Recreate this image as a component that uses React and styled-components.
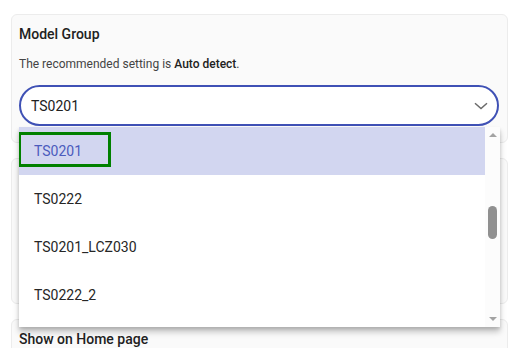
import React from "react";
import styled, { createGlobalStyle } from "styled-components";

const Global = createGlobalStyle`
  html, body { margin: 0; padding: 0; background: #ffffff; overflow: hidden; }
  body { font-family: Roboto, "Noto Sans", Arial, sans-serif; color: #212121; }
  * { box-sizing: border-box; }
`;

const Page = styled.div`
  position: relative;
  width: 520px;
  height: 348px;
  overflow: hidden;
  padding: 14px 12px 0 11px;
  display: flex;
  flex-direction: column;
  gap: 15px;
`;

const Card = styled.section`
  flex: none;
  height: ${(p) => p.$h}px;
  background: #fafafa;
  border: 1px solid #ececec;
  border-radius: 6px;
  padding: 9px 7px;
  display: flex;
  flex-direction: column;
`;

const Title = styled.h3`
  margin: 0;
  font-size: 14px;
  line-height: 20px;
  font-weight: 500;
  color: #212121;
`;

const Hint = styled.p`
  margin: 11px 0 0;
  font-size: 12px;
  line-height: 18px;
  color: #444;
  b { font-weight: 500; color: #222; }
`;

const SelectBox = styled.div`
  margin-top: 12px;
  height: 41px;
  width: 480px;
  border: 2px solid #3f51b5;
  border-radius: 21px;
  background: #fff;
  display: flex;
  align-items: center;
  justify-content: space-between;
  padding: 0 9px 0 10px;
  font-size: 14px;
  color: #212121;
`;

const Menu = styled.div`
  position: absolute;
  left: 19px;
  top: 127px;
  width: 481px;
  height: 200px;
  background: #fff;
  display: flex;
  box-shadow: 0 5px 6px rgba(0,0,0,0.22), 0 2px 3px rgba(0,0,0,0.12);
`;

const List = styled.ul`
  list-style: none;
  margin: 0;
  padding: 0;
  flex: 1;
  overflow: hidden;
`;

const Item = styled.li`
  height: 48px;
  display: flex;
  align-items: center;
  padding-left: 15px;
  font-size: 14px;
  position: relative;
  background: ${(p) => (p.$active ? "#d2d6f0" : "#fff")};
  color: ${(p) => (p.$active ? "#4b5bbd" : "#262626")};
`;

const Focus = styled.span`
  position: absolute;
  left: -1px;
  top: 5px;
  width: 93px;
  height: 35px;
  border: 3px solid #008000;
`;

const Scroll = styled.div`
  width: 15px;
  background: #fcfcfc;
  display: flex;
  flex-direction: column;
  align-items: center;
  justify-content: space-between;
  padding: 6px 0 6px;
  position: relative;
`;

const Arrow = styled.span`
  width: 0;
  height: 0;
  border-left: 4px solid transparent;
  border-right: 4px solid transparent;
  ${(p) =>
    p.$up
      ? "border-bottom: 4px solid #a3a3a3;"
      : "border-top: 4px solid #a3a3a3;"}
`;

const Thumb = styled.span`
  position: absolute;
  left: 3px;
  top: 79px;
  width: 9px;
  height: 33px;
  border-radius: 5px;
  background: #909090;
`;

export default function App() {
  return (
    <>
      <Global />
      <Page>
        <Card $h={129}>
          <Title>Model Group</Title>
          <Hint>
            The recommended setting is <b>Auto detect</b>.
          </Hint>
          <SelectBox>
            <span>TS0201</span>
            <svg width="14" height="8" viewBox="0 0 14 8">
              <path d="M1 1.2 L7 6.6 L13 1.2" fill="none" stroke="#6b6b6b" strokeWidth="1.5" />
            </svg>
          </SelectBox>
        </Card>
        <Card $h={146} />
        <Card $h={60}>
          <Title>Show on Home page</Title>
        </Card>
        <Menu>
          <List>
            <Item $active>
              TS0201
              <Focus />
            </Item>
            <Item>TS0222</Item>
            <Item>TS0201_LCZ030</Item>
            <Item>TS0222_2</Item>
          </List>
          <Scroll>
            <Arrow $up />
            <Thumb />
            <Arrow />
          </Scroll>
        </Menu>
      </Page>
    </>
  );
}
